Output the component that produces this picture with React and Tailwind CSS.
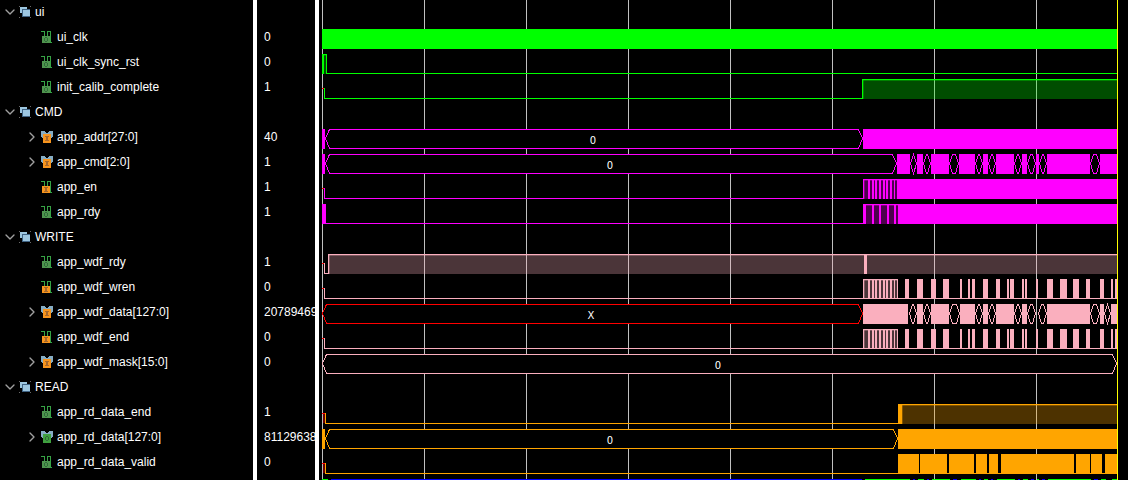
import React, { useState } from 'react';
import { ChevronDown, ChevronRight } from 'lucide-react';

const GREEN = '#00ff00';
const MAGENTA = '#ff00ff';
const PINK = '#faafbe';
const ORANGE = '#ffa500';
const RED = '#ff0000';
const BLUE = '#0000ff';

const ORIGIN = 319;
const END = 1117;
const GRID = [322, 424, 526, 628, 730, 832, 934, 1036];

// [start, end] pairs, in time-axis pixels
const CMD_SOLID = [[897, 910], [917, 923], [931, 949], [959, 975], [983, 988], [996, 1014], [1022, 1027], [1036, 1039], [1047, 1090], [1100, END]];
const CMD_OPEN = [[910, 917], [923, 931], [949, 959], [975, 983], [988, 996], [1014, 1022], [1027, 1036], [1039, 1047], [1090, 1100]];
const DATA_SOLID = [[863, 908], [917, 923], [931, 949], [960, 975], [983, 988], [996, 1014], [1022, 1027], [1047, 1090], [1100, 1104], [1111, END]];
const DATA_OPEN = [[909, 917], [923, 931], [949, 960], [975, 983], [988, 996], [1014, 1022], [1027, 1036], [1038, 1047], [1090, 1100], [1104, 1111]];
const WREN_PULSES = [[905, 909], [917, 923], [931, 936], [943, 949], [960, 962], [968, 970], [972, 975], [983, 988], [996, 1000], [1007, 1009], [1010, 1014], [1022, 1024], [1025, 1027], [1036, 1038], [1047, 1053], [1060, 1067], [1073, 1079], [1086, 1090], [1100, 1104], [1111, 1113], [1115, END]];
const BURST = [[863, 864], [868, 870], [872, 874], [875, 877], [879, 881], [883, 885], [886, 888], [890, 892], [894, 895], [897, 898]];
const RDY_BURST = [[863, 866], [872, 874], [879, 881], [887, 889], [894, 896], [898, END]];
const VALID = [[898, 919], [920, 947], [949, 974], [976, 987], [989, 998], [1001, 1074], [1076, 1090], [1091, 1102], [1105, END]];

const Solid = ({ spans, color }) => spans.map(([a, b]) => (
  <rect key={a} x={a} y="4" width={b - a} height="20" fill={color} />
));

const Low = ({ from, to = END, color }) => <rect x={from} y="23" width={to - from} height="1" fill={color} />;

const High = ({ from, to = END, color }) => (
  <g fill={color}>
    <rect x={from} y="4" width={to - from} height="20" opacity="0.3" />
    <rect x={from} y="5" width={to - from} height="1" opacity="0.3" />
    <rect x={from + 1} y="5" width="1" height="19" opacity="0.3" />
    <rect x={from} y="4" width={to - from} height="1" />
    <rect x={from} y="4" width="1" height="20" />
  </g>
);

// Unknown level at time zero, then a drop to low
const Stub = ({ color, wide }) => (
  <g>
    {wide && <rect x="323" y="14" width="2" height="9" fill={RED} opacity="0.4" />}
    <rect x="322" y="13" width="3" height="1" fill={RED} />
    <rect x={wide ? 325 : 324} y="13" width="1" height="11" fill={color} />
  </g>
);

const Bus = ({ from, to, color, label }) => {
  const mid = Math.floor((from + to) / 2) - 1;
  const s = to - from < 12 ? 3 : 4;
  const l = from + 0.5;
  const r = to - 0.5;
  return (
    <g>
      <path
        d={`M${l} 13.5L${l + s} 4.5H${r - s}L${r} 13.5L${r - s} 23.5H${l + s}Z`}
        fill="#000"
        stroke={color}
      />
      {label && (
        <text x={mid} y="19" textAnchor="middle" fill="#fff" className="font-['DejaVu_Sans',sans-serif] text-[10px]">
          {label}
        </text>
      )}
    </g>
  );
};

const Buses = ({ spans, color }) => spans.map(([a, b]) => <Bus key={a} from={a} to={b} color={color} />);

const wrenWave = (
  <>
    <Stub color={PINK} />
    <Low from={324} color={PINK} />
    <High from={863} to={898} color={PINK} />
    <Solid spans={BURST} color={PINK} />
    <Solid spans={WREN_PULSES} color={PINK} />
  </>
);

const GROUPS = [
  {
    name: 'ui',
    signals: [
      { name: 'ui_clk', value: '0', icon: 'out', wave: <Solid spans={[[322, END]]} color={GREEN} /> },
      {
        name: 'ui_clk_sync_rst', value: '0', icon: 'out',
        wave: (
          <>
            <High from={322} to={327} color={GREEN} />
            <Solid spans={[[322, 324], [326, 327]]} color={GREEN} />
            <Low from={326} color={GREEN} />
          </>
        ),
      },
      {
        name: 'init_calib_complete', value: '1', icon: 'out',
        wave: (
          <>
            <Stub color={GREEN} />
            <Low from={324} to={862} color={GREEN} />
            <High from={862} color={GREEN} />
          </>
        ),
      },
    ],
  },
  {
    name: 'CMD',
    signals: [
      {
        name: 'app_addr[27:0]', value: '40', icon: 'in', bus: true,
        wave: (
          <>
            <Bus from={325} to={863} color={MAGENTA} label="0" />
            <Solid spans={[[322, 325], [863, END]]} color={MAGENTA} />
          </>
        ),
      },
      {
        name: 'app_cmd[2:0]', value: '1', icon: 'in', bus: true,
        wave: (
          <>
            <Bus from={325} to={897} color={MAGENTA} label="0" />
            <Buses spans={CMD_OPEN} color={MAGENTA} />
            <Solid spans={[[322, 325], ...CMD_SOLID]} color={MAGENTA} />
          </>
        ),
      },
      {
        name: 'app_en', value: '1', icon: 'in',
        wave: (
          <>
            <Stub color={MAGENTA} />
            <Low from={324} to={863} color={MAGENTA} />
            <High from={863} to={897} color={MAGENTA} />
            <Solid spans={[...BURST, [898, END]]} color={MAGENTA} />
          </>
        ),
      },
      {
        name: 'app_rdy', value: '1', icon: 'out',
        wave: (
          <>
            <Low from={326} to={863} color={MAGENTA} />
            <High from={863} to={898} color={MAGENTA} />
            <Solid spans={[[322, 326], ...RDY_BURST]} color={MAGENTA} />
          </>
        ),
      },
    ],
  },
  {
    name: 'WRITE',
    signals: [
      {
        name: 'app_wdf_rdy', value: '1', icon: 'out',
        wave: (
          <>
            <Stub color={PINK} />
            <Low from={324} to={328} color={PINK} />
            <High from={328} color={PINK} />
            <Solid spans={[[864, 867]]} color={PINK} />
          </>
        ),
      },
      { name: 'app_wdf_wren', value: '0', icon: 'in', wave: wrenWave },
      {
        name: 'app_wdf_data[127:0]', value: '20789469', icon: 'in', bus: true,
        wave: (
          <>
            <Bus from={322} to={863} color={RED} label="X" />
            <Buses spans={DATA_OPEN} color={PINK} />
            <Solid spans={DATA_SOLID} color={PINK} />
          </>
        ),
      },
      { name: 'app_wdf_end', value: '0', icon: 'in', wave: wrenWave },
      {
        name: 'app_wdf_mask[15:0]', value: '0', icon: 'in', bus: true,
        wave: <Bus from={322} to={END} color={PINK} label="0" />,
      },
    ],
  },
  {
    name: 'READ',
    signals: [
      {
        name: 'app_rd_data_end', value: '1', icon: 'out',
        wave: (
          <>
            <Stub color={ORANGE} wide />
            <Low from={325} to={898} color={ORANGE} />
            <High from={901} color={ORANGE} />
            <Solid spans={[[898, 902]]} color={ORANGE} />
          </>
        ),
      },
      {
        name: 'app_rd_data[127:0]', value: '81129638', icon: 'out', bus: true,
        wave: (
          <>
            <Bus from={325} to={898} color={ORANGE} label="0" />
            <Solid spans={[[322, 325], [898, END]]} color={ORANGE} />
          </>
        ),
      },
      {
        name: 'app_rd_data_valid', value: '0', icon: 'out',
        wave: (
          <>
            <Stub color={ORANGE} wide />
            <Low from={325} color={ORANGE} />
            <Solid spans={VALID} color={ORANGE} />
          </>
        ),
      },
    ],
  },
];

// Top edge of the next bus, cut off by the bottom of the view
const NEXT_GREEN = [[322, 328], [865, 910], [918, 924], [932, 950], [961, 976], [984, 988], [997, 1015], [1023, 1028], [1037, 1039], [1048, 1091], [1101, 1106], [1112, END]];
const NEXT_BLUE = [[331, 862], [913, 915], [927, 929], [953, 957], [979, 981], [991, 993], [1018, 1020], [1031, 1034], [1042, 1045], [1094, 1098]];

const GroupIcon = () => (
  <svg className="size-3 shrink-0" viewBox="0 0 12 12" shapeRendering="crispEdges" aria-hidden="true">
    <path d="M0 0h1v1h-1zM11 0h1v1h-1zM0 11h1v1h-1zM11 11h1v1h-1z" fill="#6a6a6a" />
    <rect x="1" y="1" width="7" height="6" fill="#9cc6e0" />
    <rect x="3" y="3" width="8" height="8" fill="#3f6384" />
    <rect x="4" y="4" width="7" height="6" fill="#9cc6e0" />
  </svg>
);

const SignalIcon = ({ bus, dir }) => {
  const input = dir === 'in';
  return (
    <svg className="size-3 shrink-0" viewBox="0 0 12 12" shapeRendering="crispEdges" aria-hidden="true">
      {bus ? (
        <path d="M0 0h4v1h1v1h2v-1h1v-1h4v6h-1v1h-10v-1h-1z" fill="#86adc4" />
      ) : (
        <path d="M0 0h4v5h-1v-4h-3zM6 0h4v11h1v1h-2v-11h-2v4h-1z" fill="#36a345" />
      )}
      <rect x={bus ? 2 : 1} y={bus ? 3 : 5} width="8" height={bus ? 9 : 7} fill={input ? '#f7941d' : bus ? '#3fa03f' : '#4f944e'} />
      {input ? (
        <path d={bus ? 'M4 5h4v1h-1v3h1v1h-4v-1h1v-3h-1z' : 'M3 6h4v1h-1v3h1v1h-4v-1h1v-3h-1z'} fill="#a5672a" />
      ) : (
        <path d={bus ? 'M5 5h2v1h1v3h-1v1h-2v-1h-1v-3h1zM5 6v3h2v-3z' : 'M4 6h2v1h1v3h-1v1h-2v-1h-1v-3h1zM4 7v3h2v-3z'} fill="#2f6a38" fillRule="evenodd" />
      )}
    </svg>
  );
};

const Wave = ({ children }) => (
  <svg className="block h-[25px] w-full" shapeRendering="crispEdges">
    <g transform={`translate(${-ORIGIN} 0)`}>{children}</g>
  </svg>
);

const App = () => {
  const [closed, setClosed] = useState([]);

  const toggle = (name) => {
    setClosed(closed.includes(name) ? closed.filter(n => n !== name) : [...closed, name]);
  };

  const rows = GROUPS.flatMap(g => [
    { name: g.name, group: true },
    ...(closed.includes(g.name) ? [] : g.signals),
  ]);

  return (
    <main className="flex h-screen overflow-hidden bg-black font-['Liberation_Sans',Arial,sans-serif] text-[12px] text-white">
      <ul className="w-[253px] shrink-0 overflow-hidden whitespace-nowrap" aria-label="Signals">
        {rows.map(r => r.group ? (
          <li key={r.name} className="flex h-[25px] items-center gap-1 pb-px pl-1">
            <button className="flex w-[11px] justify-center text-[#a0a0a0]" onClick={() => toggle(r.name)} aria-label={`Toggle ${r.name}`}>
              {closed.includes(r.name) ? <ChevronRight size={16} className="shrink-0" /> : <ChevronDown size={16} className="shrink-0" />}
            </button>
            <GroupIcon />
            <span>{r.name}</span>
          </li>
        ) : (
          <li key={r.name} className="flex h-[25px] items-center gap-1 pb-px pl-[26px]">
            {r.bus ? (
              <button className="flex w-[11px] justify-center text-[#a0a0a0]" aria-label={`Expand ${r.name}`}>
                <ChevronRight size={16} className="shrink-0" />
              </button>
            ) : (
              <span className="w-[11px]" />
            )}
            <SignalIcon bus={r.bus} dir={r.icon} />
            <span>{r.name}</span>
          </li>
        ))}
      </ul>

      <div className="w-1 shrink-0 bg-white" role="separator" />

      <ul className="w-[58px] shrink-0 overflow-hidden pl-[7px] whitespace-nowrap" aria-label="Values">
        {rows.map(r => <li key={r.name} className="h-[25px] leading-[25px]">{r.value}</li>)}
      </ul>

      <div className="w-1 shrink-0 bg-white" role="separator" />

      <section className="relative min-w-0 flex-1 overflow-hidden" aria-label="Waveforms">
        <svg className="absolute inset-0 h-full w-full" shapeRendering="crispEdges" aria-hidden="true">
          {GRID.map(x => <rect key={x} x={x - ORIGIN} width="1" height="100%" fill="#c0c0c0" />)}
        </svg>
        <div className="relative">
          {rows.map(r => <Wave key={r.name}>{r.wave}</Wave>)}
          <Wave>
            {NEXT_GREEN.map(([a, b]) => <rect key={a} x={a} y="4" width={b - a} height="1" fill={GREEN} />)}
            {NEXT_BLUE.map(([a, b]) => <rect key={a} x={a} y="4" width={b - a} height="1" fill={BLUE} />)}
          </Wave>
        </div>
        <svg className="absolute inset-0 h-full w-full" shapeRendering="crispEdges" aria-hidden="true">
          <rect x={END - ORIGIN} width="1" height="100%" fill="#ffff00" />
        </svg>
      </section>
    </main>
  );
};

export default App;
